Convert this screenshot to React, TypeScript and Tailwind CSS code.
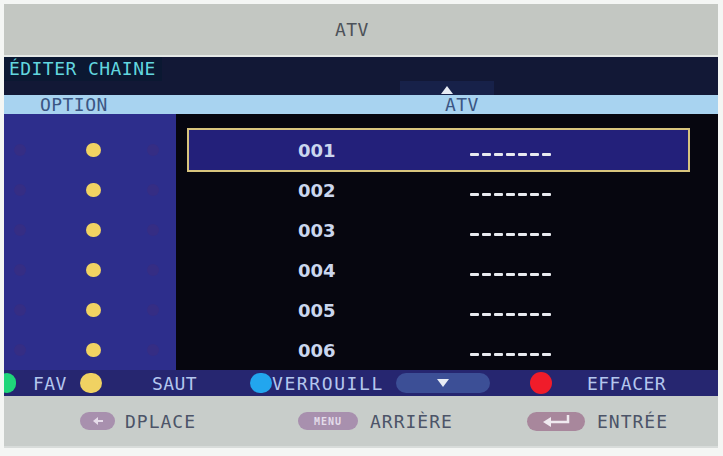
import React from "react";

const ROWS = ["001", "002", "003", "004", "005", "006"];

const mono = { fontFamily: '"DejaVu Sans Mono", "Liberation Mono", monospace' };
const sans = { fontFamily: '"DejaVu Sans", "Liberation Sans", sans-serif' };

const Tri = ({ up }: { up?: boolean }) => (
  <svg width="12" height="8" viewBox="0 0 12 8">
    <path d={up ? "M6 0 L12 8 L0 8 Z" : "M0 0 L12 0 L6 8 Z"} fill="#e8ecf4" />
  </svg>
);

const Dashes = () => (
  <span className="flex gap-[3px] mt-[8px]">
    {[0, 1, 2, 3, 4, 5, 6].map((d) => (
      <span key={d} className="w-[9px] h-[3px] bg-[#e8eaf0] rounded-[1px]" />
    ))}
  </span>
);

export default function App() {
  return (
    <div
      className="w-[723px] h-[456px] bg-[#f4f6f4] overflow-hidden pt-[4px] pl-[4px] text-[18px] tracking-[0.45px] whitespace-nowrap"
      style={mono}
    >
      <div className="w-[714px] flex flex-col">
        {/* title */}
        <div className="h-[51px] bg-[#c3c7c2] flex items-center pl-[331px] text-[#4d5259]">ATV</div>
        <div className="h-[2px] bg-[#e4e8e6]" />

        {/* navy band */}
        <div className="h-[38px] bg-[#121836] flex flex-col">
          <div className="h-[24px] w-[158px] bg-[#0b1832] text-[#62d6df] leading-[24px] pl-[5px]">
            ÉDITER CHAINE
          </div>
          <div className="flex-1 flex items-end pl-[396px]">
            <div className="w-[94px] h-[14px] bg-[#172149] flex items-end justify-center pb-[1px]">
              <Tri up />
            </div>
          </div>
        </div>

        {/* header row */}
        <div className="h-[19px] bg-[#a8d3f0] flex items-center text-[#3b5684]">
          <span className="pl-[36px] w-[441px]">OPTION</span>
          <span>ATV</span>
        </div>

        {/* body */}
        <div className="h-[256px] flex">
          <div className="w-[172px] bg-[#2d2e8c] pt-[16px] flex flex-col">
            {ROWS.map((r) => (
              <div key={r} className="h-[40px] flex items-center">
                <span className="ml-[10px] w-[12px] h-[12px] rounded-full bg-[#352d84]" />
                <span className="ml-[60px] w-[15px] h-[14px] rounded-full bg-[#f0d262]" />
                <span className="ml-[46px] w-[12px] h-[12px] rounded-full bg-[#352d84]" />
              </div>
            ))}
          </div>
          <div className="flex-1 bg-[#06060f] pt-[16px] flex flex-col">
            {ROWS.map((r, i) => (
              <div
                key={r}
                className={
                  i === 0
                    ? "h-[40px] ml-[13px] mr-[30px] flex items-center bg-[#23207a] outline-2 outline-[#d8c47e]"
                    : "h-[40px] ml-[13px] mr-[30px] flex items-center"
                }
              >
                <span
                  className="ml-[109px] w-[172px] text-[18px] tracking-normal font-bold text-[#cad6ee]"
                  style={sans}
                >
                  {r}
                </span>
                <Dashes />
              </div>
            ))}
          </div>
        </div>

        {/* colour key bar */}
        <div className="h-[26px] bg-[#262670] flex items-center text-[#b4c6ee] overflow-hidden">
          <span className="-ml-[6px] w-[18px] h-[20px] rounded-full bg-[#1fd67a] shrink-0" />
          <span className="ml-[17px] w-[44px]">FAV</span>
          <span className="ml-[3px] w-[22px] h-[20px] rounded-full bg-[#f0d262] shrink-0" />
          <span className="ml-[50px] w-[50px]">SAUT</span>
          <span className="ml-[48px] w-[22px] h-[20px] rounded-full bg-[#22a6ee] shrink-0" />
          <span className="w-[118px] tracking-[1.6px]">VERROUILL</span>
          <span className="ml-[6px] w-[94px] h-[20px] rounded-full bg-[#3c4f96] flex items-center justify-center shrink-0">
            <Tri />
          </span>
          <span className="ml-[40px] w-[22px] h-[22px] rounded-full bg-[#f01c2a] shrink-0" />
          <span className="ml-[35px]">EFFACER</span>
        </div>

        {/* help bar */}
        <div className="h-[50px] bg-[#c8cdca] flex items-center text-[#4c5468] tracking-[1px]">
          <span className="ml-[76px] w-[35px] h-[18px] rounded-full bg-[#a890ae] flex items-center justify-center shrink-0">
            <svg width="10" height="8" viewBox="0 0 10 8">
              <path d="M0 4 L5 0 L5 3 L10 3 L10 5 L5 5 L5 8 Z" fill="#e6dcea" />
            </svg>
          </span>
          <span className="ml-[10px] w-[80px]">DPLACE</span>
          <span className="ml-[93px] w-[60px] h-[18px] rounded-full bg-[#a890ae] flex items-center justify-center text-[10px] font-bold text-[#e4dcea] tracking-[1px] shrink-0">
            MENU
          </span>
          <span className="ml-[12px] w-[100px]">ARRIÈRE</span>
          <span className="ml-[57px] w-[58px] h-[19px] rounded-full bg-[#a8879c] flex items-center justify-center shrink-0">
            <svg width="28" height="12" viewBox="0 0 28 12">
              <path d="M26 0 L26 7 L8 7" stroke="#f0eaf0" strokeWidth="2.5" fill="none" />
              <path d="M1 7 L9 2 L9 12 Z" fill="#f0eaf0" />
            </svg>
          </span>
          <span className="ml-[12px]">ENTRÉE</span>
        </div>
        <div className="h-[2px] bg-[#d8dcda]" />
      </div>
    </div>
  );
}
